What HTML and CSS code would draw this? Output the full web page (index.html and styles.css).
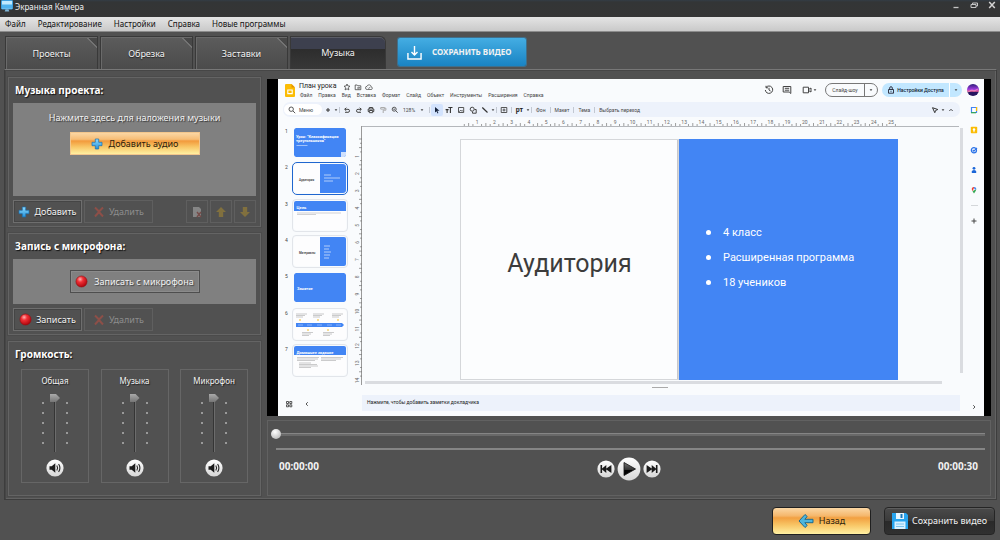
FILE: index.html
```html
<!DOCTYPE html>
<html lang="ru">
<head>
<meta charset="utf-8">
<title>Экранная Камера</title>
<link rel="stylesheet" href="styles.css">
</head>
<body>
<svg class="defs" aria-hidden="true">
  <defs>
    <linearGradient id="g-blue" x1="0" y1="0" x2="0" y2="1"><stop offset="0" stop-color="#8fdcff"/><stop offset="1" stop-color="#2390d8"/></linearGradient>
    <linearGradient id="g-orb" x1="0" y1="0" x2="0" y2="1"><stop offset="0" stop-color="#ffffff"/><stop offset="1" stop-color="#d6d6d6"/></linearGradient>
    <linearGradient id="g-dark" x1="0" y1="0" x2="0" y2="1"><stop offset="0" stop-color="#777"/><stop offset=".55" stop-color="#333"/><stop offset=".56" stop-color="#000"/></linearGradient>
    <radialGradient id="g-red" cx=".38" cy=".3" r=".75"><stop offset="0" stop-color="#ffb0b0"/><stop offset=".35" stop-color="#f03036"/><stop offset="1" stop-color="#a80008"/></radialGradient>
    <linearGradient id="g-avatar" x1="0" y1="0" x2="0" y2="1"><stop offset="0" stop-color="#2a1b78"/><stop offset=".45" stop-color="#a03be0"/><stop offset=".6" stop-color="#f0609a"/><stop offset=".7" stop-color="#24145e"/></linearGradient>
  </defs>
  <symbol id="i-plus" viewBox="0 0 12 12"><path d="M4.300 1h3.400v3.300H11v3.400H7.700V11H4.300V7.700H1V4.300h3.300z" fill="url(#g-blue)" stroke="#1b6fae" stroke-width=".7"/></symbol>
  <symbol id="i-cross" viewBox="0 0 12 12"><path d="M2 1.500 6 5.500l4-4M2 10.500 6 6l4 4.500" fill="none" stroke="#8d4f48" stroke-width="2"/></symbol>
  <symbol id="i-rec" viewBox="0 0 14 14"><circle cx="7" cy="7" r="6" fill="url(#g-red)" stroke="#8f1014" stroke-width=".6"/></symbol>
  <symbol id="i-up" viewBox="0 0 12 12"><path d="M6 1l5 5H8.200v5H3.800V6H1z" fill="#81703e"/></symbol>
  <symbol id="i-speaker" viewBox="0 0 18 18"><circle cx="9" cy="9" r="8.600" fill="url(#g-orb)"/><path d="M3.500 7.300h2.200L9.300 4.200v9.600L5.700 10.700H3.500z" fill="#1b1b1b"/><path d="M10.800 6.500q1.600 2.500 0 5M12.600 5q2.600 4 0 8" fill="none" stroke="#222" stroke-width="1.100"/></symbol>
  <symbol id="i-prev" viewBox="0 0 18 18"><circle cx="9" cy="9" r="8.600" fill="url(#g-orb)"/><path d="M3.500 5h1.600v3.600L9.300 5v3.600L14.400 5v8L9.300 9.400V13L5.100 9.400V13H3.500z" fill="#1b1b1b"/></symbol>
  <symbol id="i-play" viewBox="0 0 24 24"><circle cx="12" cy="12" r="11.400" fill="url(#g-orb)"/><path d="M7 5.500 18.500 12 7 18.500z" fill="url(#g-dark)" stroke="#111" stroke-width=".8"/></symbol>
  <symbol id="i-caret" viewBox="0 0 4 4"><path d="M.6 1.200h2.800L2 2.900z" fill="#444"/></symbol>
</svg>

<div class="window">
  <header class="titlebar">
    <svg class="app-icon" viewBox="0 0 12 12"><rect x=".5" y=".5" width="11" height="8.500" rx=".6" fill="#bfe9ff" stroke="#3c9fe0"/><path d="M1 4.500h10V8.500H1z" fill="#4fb2ee"/><path d="M4.500 9.200h3l.8 2.300H3.700z" fill="#7fb6d8"/></svg>
    <h1 class="title">Экранная Камера</h1>
    <div class="winbtns">
      <button type="button" aria-label="Свернуть"><svg viewBox="0 0 8 8"><path d="M1.500 6.500h5" stroke="#c4c4c4" stroke-width="1.300"/></svg></button>
      <button type="button" aria-label="Развернуть"><svg viewBox="0 0 8 8"><path d="M1 3.500h5v3H1zM2.500 3.500v-1.500H7.500v3H6" fill="none" stroke="#c4c4c4"/></svg></button>
      <button type="button" aria-label="Закрыть"><svg viewBox="0 0 8 8"><path d="M1.200 1l5.600 6M6.800 1 1.200 7" stroke="#d4d4d4" stroke-width="1.500"/></svg></button>
    </div>
  </header>

  <nav class="menubar">
    <a href="#">Файл</a><a href="#">Редактирование</a><a href="#">Настройки</a><a href="#">Справка</a><a href="#">Новые программы</a>
  </nav>

  <div class="tabs">
    <button type="button" class="tab">Проекты</button>
    <button type="button" class="tab">Обрезка</button>
    <button type="button" class="tab">Заставки</button>
    <button type="button" class="tab active">Музыка</button>
    <button type="button" class="save-top">
      <svg viewBox="0 0 16 16"><path d="M1 8.500V15h14V8.500M8 1v9.500M4.800 7.500 8 10.700l3.200-3.200" fill="none" stroke="#fff" stroke-width="1.500"/></svg>
      СОХРАНИТЬ ВИДЕО
    </button>
  </div>

  <main class="workspace">
    <aside class="sidebar">
      <section class="panel">
        <h2>Музыка проекта:</h2>
        <div class="well well-music">
          <p>Нажмите здесь для наложения музыки</p>
          <button type="button" class="btn-orange wide"><svg class="ic"><use href="#i-plus"/></svg>Добавить аудио</button>
        </div>
        <div class="row">
          <button type="button" class="btn"><svg class="ic"><use href="#i-plus"/></svg>Добавить</button>
          <button type="button" class="btn" disabled><svg class="ic"><use href="#i-cross"/></svg>Удалить</button>
          <span class="spacer"></span>
          <button type="button" class="btn sq" disabled aria-label="Обрезать"><svg class="ic" viewBox="0 0 12 12"><path d="M2 1h6l2 2v8H2z" fill="#858585"/><path d="M6 6l4 5M10 6l-4 5" stroke="#754b48" stroke-width="1.400"/></svg></button>
          <button type="button" class="btn sq" disabled aria-label="Вверх"><svg class="ic"><use href="#i-up"/></svg></button>
          <button type="button" class="btn sq" disabled aria-label="Вниз"><svg class="ic flip-y"><use href="#i-up"/></svg></button>
        </div>
      </section>

      <section class="panel">
        <h2>Запись с микрофона:</h2>
        <div class="well well-mic">
          <button type="button" class="btn-grey wide"><svg class="ic-l"><use href="#i-rec"/></svg>Записать с микрофона</button>
        </div>
        <div class="row">
          <button type="button" class="btn"><svg class="ic-l"><use href="#i-rec"/></svg>Записать</button>
          <button type="button" class="btn" disabled><svg class="ic"><use href="#i-cross"/></svg>Удалить</button>
        </div>
      </section>

      <section class="panel grow">
        <h2>Громкость:</h2>
        <div class="volumes">
          <div class="volume"><label for="v1">Общая</label><div class="fader"><input id="v1" type="range" value="100"></div><button type="button" class="round" aria-label="Звук: общая"><svg><use href="#i-speaker"/></svg></button></div>
          <div class="volume"><label for="v2">Музыка</label><div class="fader"><input id="v2" type="range" value="100"></div><button type="button" class="round" aria-label="Звук: музыка"><svg><use href="#i-speaker"/></svg></button></div>
          <div class="volume"><label for="v3">Микрофон</label><div class="fader"><input id="v3" type="range" value="100"></div><button type="button" class="round" aria-label="Звук: микрофон"><svg><use href="#i-speaker"/></svg></button></div>
        </div>
      </section>
    </aside>

    <div class="content">
      <div class="video">
        <div class="slides">
          <div class="s-header">
            <svg class="s-logo" viewBox="0 0 10 13"><path d="M1 0h5.500L10 3.500V12a1 1 0 0 1-1 1H1a1 1 0 0 1-1-1V1a1 1 0 0 1 1-1z" fill="#fbbc04"/><path d="M6.500 0 10 3.500H6.500z" fill="#e59400"/><path d="M2.800 6h4.400v3.600H2.800z" fill="none" stroke="#fff" stroke-width="1.100"/></svg>
            <div class="s-names">
              <div class="s-title">План урока
                <svg viewBox="0 0 8 8"><path d="M4 1l.9 2 2.100.2-1.600 1.500.5 2.200L4 5.800 2.100 6.900l.5-2.200L1 3.200 3.100 3z" fill="none" stroke="#444" stroke-width=".8"/></svg>
                <svg viewBox="0 0 8 8"><path d="M1.200 2h2l.7.8h2.900v3.900H1.200zM3 5h2.400M4.500 3.900 5.600 5l-1.100 1" fill="none" stroke="#444" stroke-width=".8"/></svg>
                <svg viewBox="0 0 8 8"><path d="M2.200 6.500h3.800a1.300 1.300 0 0 0 .1-2.600A2.100 2.100 0 0 0 2 3.300a1.600 1.600 0 0 0 .2 3.200zM3 4.700l.8.8L5.200 4" fill="none" stroke="#444" stroke-width=".7"/></svg>
              </div>
              <div class="s-menu"><span>Файл</span><span>Правка</span><span>Вид</span><span>Вставка</span><span>Формат</span><span>Слайд</span><span>Объект</span><span>Инструменты</span><span>Расширения</span><span>Справка</span></div>
            </div>
            <div class="s-actions">
              <svg class="a-ic" viewBox="0 0 10 10"><path d="M2 2.500A3.700 3.700 0 1 1 1.300 5M2 .8v2h2M5 2.800V5l1.600 1" fill="none" stroke="#444"/></svg>
              <svg class="a-ic" viewBox="0 0 10 10"><path d="M1.200 1.500h7.600v7L7.200 7h-6zM2.800 3.300h4.400M2.800 5.200h4.400" fill="none" stroke="#444"/></svg>
              <span class="cam"><svg class="a-ic" viewBox="0 0 10 10"><path d="M1.200 2.200h5.300v5.600H1.200zM6.500 4.500 9 3v4L6.500 5.500z" fill="none" stroke="#444"/></svg><svg class="caret"><use href="#i-caret"/></svg></span>
              <span class="pill show"><span>Слайд-шоу</span><svg class="caret"><use href="#i-caret"/></svg></span>
              <span class="pill share"><span><svg viewBox="0 0 8 8"><path d="M1.500 3.500h5v3.700h-5zM2.700 3.500V2a1.300 1.300 0 0 1 2.600 0v1.500M4 4.800v1" fill="none" stroke="#223" stroke-width=".9"/></svg>Настройки Доступа</span><svg class="caret"><use href="#i-caret"/></svg></span>
              <svg class="avatar" viewBox="0 0 12 12"><circle cx="6" cy="6" r="6" fill="url(#g-avatar)"/><path d="M1 8 5 6l2 1 4-2" stroke="#f5a0c0" stroke-width=".8" fill="none"/></svg>
            </div>
          </div>

          <div class="s-main">
            <div class="s-toolbar">
              <span class="search"><svg viewBox="0 0 8 8"><path d="M5 5l2.200 2.200M5.400 3.200a2.200 2.200 0 1 1-4.400 0 2.200 2.200 0 0 1 4.400 0z" fill="none" stroke="#444" stroke-width=".9"/></svg>Меню</span>
              <svg class="t" viewBox="0 0 12 12"><path d="M6 4v4M4 6h4" stroke="#333"/></svg>
              <svg class="caret"><use href="#i-caret"/></svg><i></i>
              <svg class="t" viewBox="0 0 12 12"><path d="M4 8.300h3a1.500 1.500 0 0 0 0-3H3.800M5.300 3.700 3.700 5.300l1.600 1.600" fill="none" stroke="#444"/></svg>
              <svg class="t" viewBox="0 0 12 12"><path d="M8 8.300H5a1.500 1.500 0 0 1 0-3h3.200M6.700 3.700l1.600 1.600-1.600 1.600" fill="none" stroke="#444"/></svg>
              <svg class="t" viewBox="0 0 12 12"><path d="M4.300 5V3.500h3.400V5M4.300 7.500H3.200V5h5.600v2.500H7.700M4.300 6.500h3.400v2.200H4.300z" fill="none" stroke="#444"/></svg>
              <svg class="t" viewBox="0 0 12 12"><path d="M3.700 3.500h4v1.600h-4zM7.700 4.200h1.200v2H6.200v2.800" fill="none" stroke="#aaa"/></svg>
              <svg class="t" viewBox="0 0 12 12"><path d="M6.700 6.700l2 2M7.200 5.200a2 2 0 1 1-4 0 2 2 0 0 1 4 0zM4.300 5.200h1.800" fill="none" stroke="#444" stroke-width=".9"/></svg>
              <span class="pct">128%</span><svg class="caret wide-c"><use href="#i-caret"/></svg><i></i>
              <svg class="t on" viewBox="0 0 12 12"><path d="M4 3l4.500 3.700H6.300L7.400 9l-.9.400-1-2.200L4 8.500z" fill="#16233c"/></svg>
              <svg class="t" viewBox="0 0 12 12"><path d="M5.300 3.500h4.200M7.400 3.500V9M2.600 5.600h3M4.100 5.600V9" stroke="#333" stroke-width="1.100"/></svg>
              <svg class="t" viewBox="0 0 12 12"><path d="M3.500 3.500h5.200v5H3.500zM4.300 7.700l1.400-1.600 1 1 .6-.6 1 1.200" fill="none" stroke="#444" stroke-width=".9"/></svg>
              <svg class="t" viewBox="0 0 12 12"><circle cx="5.200" cy="5.200" r="2" fill="none" stroke="#444"/><path d="M7.500 5.500h1.700v3.700H5.500V7.600" fill="none" stroke="#444"/></svg>
              <svg class="t" viewBox="0 0 12 12"><path d="M3.300 3.500l5.200 5" stroke="#333" stroke-width="1.200"/></svg>
              <svg class="caret"><use href="#i-caret"/></svg><i></i>
              <svg class="t" viewBox="0 0 12 12"><path d="M3.200 3.500h5.600v5H3.200zM6 4.500v3M4.500 6h3" fill="none" stroke="#444" stroke-width=".9"/></svg><i></i>
              <b class="py">рт</b><svg class="caret"><use href="#i-caret"/></svg><i></i>
              <span class="w">Фон</span><i></i><span class="w">Макет</span><i></i><span class="w">Тема</span><i></i><span class="w">Выбрать переход</span>
              <span class="spacer"></span>
              <svg class="t" viewBox="0 0 12 12"><path d="M3.500 3.700l5.300 1.800-2.200 1-.8 2.200z" fill="none" stroke="#333"/></svg>
              <svg class="caret"><use href="#i-caret"/></svg>
              <svg class="t end" viewBox="0 0 12 12"><path d="M4.300 7 6 5.300 7.700 7" fill="none" stroke="#333" stroke-width=".9"/></svg>
            </div>

            <div class="s-body">
              <div class="film">
                <ol class="thumbs">
                  <li><span>1</span><svg class="thumb" viewBox="0 0 52 29"><rect width="52" height="29" rx="2" fill="#4285f4"/><path d="M47 29v-5h5v3a2 2 0 0 1-2 2z" fill="#cfe0fc"/><text x="2" y="10" class="tt">Урок: "Классификация</text><text x="2" y="14" class="tt">треугольников"</text><path d="M2.500 17.500h11" stroke="#b8d1fb" stroke-width=".8"/></svg></li>
                  <li class="current"><span>2</span><svg class="thumb" viewBox="0 0 52 29"><rect width="52" height="29" fill="#fdfdfe"/><rect x="26" width="26" height="29" fill="#4285f4"/><text x="5" y="17" class="td">Аудитория</text><path d="M30 11h7M30 14h16M30 17h9" stroke="#cfe0fc" stroke-width=".8"/></svg></li>
                  <li><span>3</span><svg class="thumb line" viewBox="0 0 52 29"><rect width="52" height="29" fill="#fdfdfe"/><rect width="52" height="10" fill="#4285f4"/><text x="2.500" y="8" class="tt">Цель</text><path d="M3 12h44M3 13.500h19" stroke="#b5b5b8" stroke-width=".6"/></svg></li>
                  <li><span>4</span><svg class="thumb line" viewBox="0 0 52 29"><rect width="52" height="29" fill="#fdfdfe"/><rect x="26" width="26" height="29" fill="#4285f4"/><text x="5" y="17" class="td">Материалы</text><path d="M30 9h6M30 12h5M30 15h7M30 18h6M30 21h5" stroke="#cfe0fc" stroke-width=".8"/></svg></li>
                  <li><span>5</span><svg class="thumb" viewBox="0 0 52 29"><rect width="52" height="29" rx="2" fill="#4285f4"/><text x="3" y="16.500" class="tt">Занятие</text></svg></li>
                  <li><span>6</span><svg class="thumb line" viewBox="0 0 52 29"><rect width="52" height="29" fill="#fdfdfe"/><path d="M2 13h46l2 2-2 2H2z" fill="#4285f4"/><path d="M4 15h5M13 15h5M23 15h5M33 15h5M42 15h5" stroke="#a9c7fa" stroke-width=".7"/><path d="M2 4h11M2 5.500h9M2 7h7M19 4h11M19 5.500h9M19 7h7M38 4h11M38 5.500h9M38 7h7M8 22.500h11M8 24h9M8 25.500h7M29 22.500h11M29 24h9M29 25.500h7" stroke="#aaa" stroke-width=".6"/><path d="M5 10h2M23 10h2M43 10h2M13 20h2M33 20h2" stroke="#f2bd2c" stroke-width="1.200"/></svg></li>
                  <li><span>7</span><svg class="thumb line" viewBox="0 0 52 29"><rect width="52" height="29" fill="#fdfdfe"/><rect width="52" height="9" fill="#4285f4"/><text x="2.500" y="7.500" class="tt">Домашнее задание</text><path d="M3 11.500h22M3 13h21M3 14.500h18M27 11.500h22M27 13h20M27 14.500h15M5 17h12M5 18.500h18M5 20h19M5 21.500h12" stroke="#aaa" stroke-width=".6"/></svg></li>
                </ol>
                <div class="film-foot">
                  <svg viewBox="0 0 8 8"><path d="M1.500 1.500h2v2h-2zM4.800 1.500h2v2h-2zM1.500 4.800h2v2h-2zM4.800 4.800h2v2h-2z" fill="none" stroke="#444" stroke-width=".9"/></svg>
                  <svg viewBox="0 0 8 8"><path d="M4.800 2.200 3 4l1.800 1.800" fill="none" stroke="#444" stroke-width=".9"/></svg>
                </div>
              </div>
              <svg class="ruler-v" id="ruler-v"></svg>
              <div class="stage">
                <svg class="ruler-h" id="ruler-h"></svg>
                <div class="canvas">
                  <div class="slide">
                    <div class="slide-l">Аудитория</div>
                    <ul class="slide-r"><li>4 класс</li><li>Расширенная программа</li><li>18 учеников</li></ul>
                  </div>
                  <div class="vscroll"></div>
                </div>
                <div class="hscroll"></div>
                <div class="grip"></div>
                <div class="notes">Нажмите, чтобы добавить заметки докладчика</div>
              </div>
            </div>
          </div>

          <div class="s-rail">
            <svg viewBox="0 0 8 8"><path d="M1.500 1.500h5v5h-5z" fill="#fff" stroke="#4285f4" stroke-width="1.200"/><path d="M6.600 1v4" stroke="#fbbc04" stroke-width="1.200"/><path d="M1 6.700h5" stroke="#34a853" stroke-width="1.200"/></svg>
            <svg viewBox="0 0 8 8"><rect x=".8" y=".8" width="6.400" height="6.400" rx=".8" fill="#fbbc04"/><circle cx="4" cy="3.500" r="1.200" fill="#fff"/><path d="M4 4v2.200" stroke="#fff"/></svg>
            <svg viewBox="0 0 8 8"><circle cx="3.900" cy="4.200" r="2.600" fill="none" stroke="#2a72e8" stroke-width="1.200"/><path d="M2.700 4l1.200 1.200L7 1.900" fill="none" stroke="#2a72e8" stroke-width="1.100"/></svg>
            <svg viewBox="0 0 8 8"><circle cx="4" cy="2.300" r="1.400" fill="#1a66d8"/><path d="M1.800 7V5.500a2.200 1.500 0 0 1 4.400 0V7z" fill="#1a66d8"/></svg>
            <svg viewBox="0 0 8 8"><path d="M4 7.500 2.500 5.200 5.500 3.500 6.300 3.600Q6.200 4.800 4 7.500z" fill="#34a853"/><path d="M1.800 3.500A2.200 2.200 0 0 1 4 1v2.500L2.400 5z" fill="#ea4335"/><path d="M4 1a2.200 2.200 0 0 1 2.200 2.500H4z" fill="#4285f4"/><circle cx="4" cy="3.200" r=".8" fill="#fff"/></svg>
            <hr>
            <svg viewBox="0 0 8 8"><path d="M4 1.500v5M1.500 4h5" stroke="#444"/></svg>
            <span class="spacer"></span>
            <svg class="last" viewBox="0 0 8 8"><path d="M3.200 2.200 5 4 3.200 5.800" fill="none" stroke="#444" stroke-width=".9"/></svg>
          </div>
        </div>
      </div>

      <section class="player">
        <input class="seek" type="range" value="0" aria-label="Позиция">
        <div class="line2"></div>
        <div class="transport">
          <time>00:00:00</time>
          <div class="keys">
            <button type="button" class="round" aria-label="В начало"><svg><use href="#i-prev"/></svg></button>
            <button type="button" class="round big" aria-label="Воспроизвести"><svg><use href="#i-play"/></svg></button>
            <button type="button" class="round" aria-label="В конец"><svg class="flip-x"><use href="#i-prev"/></svg></button>
          </div>
          <time>00:00:30</time>
        </div>
      </section>
    </div>
  </main>

  <footer class="footer">
    <button type="button" class="foot-btn back"><svg viewBox="0 0 16 16"><path d="M7 1.500 9.200 3.500 6.800 6.300H15v3.400H6.800l2.400 2.800L7 14.500 1 8z" fill="#4db5dd" stroke="#1f6a8c"/></svg>Назад</button>
    <button type="button" class="foot-btn save"><svg viewBox="0 0 16 16"><path d="M0 0h14l2 2v14H0z" fill="#27a4ee"/><path d="M4 0h8v6H4z" fill="#e6f6ff"/><path d="M8.500 1h2v4h-2z" fill="#1876b8"/><path d="M2.500 8.500h11V16h-11z" fill="#d9f1ff"/><path d="M4 11h8M4 13.500h8" stroke="#7cc4ee"/></svg>Сохранить видео</button>
  </footer>
</div>
<script src="rulers.js"></script>
</body>
</html>
```

FILE: styles.css
```css
* { box-sizing: border-box; }
body { margin: 0; background: #515151; color: #f2f2f2; font: 9px/12px "Noto Sans", "Open Sans", sans-serif; }
button { font: inherit; color: inherit; border: 0; padding: 0; background: none; }
h1, h2, p, ul, ol { margin: 0; padding: 0; font-size: inherit; list-style: none; }
svg { display: block; flex: none; }
.defs { position: absolute; width: 0; height: 0; }
.spacer { flex: 1; }
.window { min-height: 100vh; display: flex; flex-direction: column; }

.titlebar { display: flex; align-items: flex-start; height: 17px; background: linear-gradient(#333c45 0, #333536 2px, #353535); }
.app-icon { width: 12px; height: 12px; margin-left: 1px; }
.title { font-weight: 400; font-size: 8px; margin-left: 2px; line-height: 13px; }
.winbtns { display: flex; gap: 10px; margin: 1px 4px 0 auto; }
.winbtns svg { width: 8px; height: 8px; }

.menubar { display: flex; gap: 12px; height: 15px; padding-left: 5px; background: linear-gradient(#e4e4e4, #c9c9c9); border-bottom: 1px solid #8c8c8c; font-size: 8px; }
.menubar a { color: #111; text-decoration: none; line-height: 14px; }

.tabs { display: flex; gap: 2px; height: 37px; padding: 4px 4px 0 5px; }
.tab { width: 93px; height: 33px; border: 1px solid #393939; border-bottom: 0; padding-top: 2px; background: linear-gradient(225deg, #484848 0 7px, #737373 7px 8px, transparent 8px), linear-gradient(#5c5c5c, #4b4b4b); box-shadow: inset 1px 1px #6a6a6a; text-shadow: 0 1px 1px #222; }
.tab.active { width: 96px; border-radius: 0 6px 0 0; padding: 0; background: linear-gradient(#3d404e 0 12px, #2d2d2d 12px, #383838); box-shadow: inset 0 1px #5b5d66; }
.save-top { display: flex; align-items: center; gap: 10px; width: 128px; height: 28px; margin: 2px 0 0 10px; padding-left: 9px; border-radius: 2px; background: linear-gradient(#44ade3, #1983c3); box-shadow: 0 0 0 1px #3f6f8b; font-size: 8px; font-weight: 700; white-space: nowrap; }
.save-top svg { width: 15px; height: 15px; }

.workspace { display: flex; gap: 6px; margin: 0 3px 0 4px; padding: 7px 5px 3px 3px; border: 1px solid #3d3d3d; border-top-color: #777; box-shadow: inset 1px 1px #464646, inset -1px -1px #626262; }
.sidebar { flex: none; width: 253px; display: flex; flex-direction: column; gap: 6px; }
.panel { padding: 5px 4px 3px; border: 1px solid #646464; box-shadow: 0 0 0 1px #4b4b4b; }
.panel.grow { flex: 1; }
.panel h2 { padding-left: 2px; font-size: 10px; line-height: 14px; font-weight: 700; text-shadow: 1px 1px 1px #111; color: #fff; }
.well { display: flex; flex-direction: column; align-items: center; margin-top: 6px; background: #808080; }
.well-music { height: 93px; padding-top: 9px; gap: 8px; }
.well-music p { text-shadow: 1px 1px 1px #333; }
.well-mic { height: 45px; justify-content: center; }
.row { display: flex; gap: 2px; margin-top: 4px; }
.btn, .wide { display: flex; align-items: center; justify-content: center; gap: 4px; height: 23px; white-space: nowrap; }
.btn { width: 69px; border: 1px solid #6e6e6e; box-shadow: inset 0 0 0 1px #454545; text-shadow: 0 1px 1px #222; }
.btn:disabled { color: #8d8d8d; border-color: #5f5f5f; box-shadow: none; text-shadow: none; }
.btn.sq { width: 22px; }
.ic { width: 12px; height: 12px; }
.ic-l { width: 13px; height: 13px; }
.flip-y { transform: scaleY(-1); }
.flip-x { transform: scaleX(-1); }
.wide { width: 130px; gap: 6px; }
.btn-orange { color: #2c1d0c; background: linear-gradient(#fbd7a4, #f7bd76 30%, #f29a3c 38%, #f8c565 65%, #fff0a2); border: 1px solid #f3c68c; }
.btn-grey { border: 1px solid #4e4e4e; box-shadow: inset 0 0 0 1px #8b8b8b; text-shadow: 1px 1px 1px #444; }

.volumes { display: flex; justify-content: space-between; margin: 8px 8px 0; }
.volume { display: flex; flex-direction: column; align-items: center; width: 68px; height: 114px; border: 1px solid #666; padding-top: 5px; text-shadow: 1px 1px 1px #222; font-size: 8px; }
.fader { width: 26px; height: 58px; margin-top: 7px; display: flex; justify-content: center; background: radial-gradient(circle at 1px 5px, #999 0 1px, transparent 1px) left / 2px 10px repeat-y, radial-gradient(circle at 1px 5px, #999 0 1px, transparent 1px) right / 2px 10px repeat-y; }
.fader input { appearance: none; writing-mode: vertical-lr; direction: rtl; width: 10px; height: 58px; margin: 0; background: linear-gradient(90deg, #353535 50%, #6c6c6c 50%) center / 2px 100% no-repeat; }
.fader input::-webkit-slider-thumb { appearance: none; width: 10px; height: 8px; background: linear-gradient(#aaa, #767676); clip-path: polygon(0 0, 60% 0, 100% 50%, 60% 100%, 0 100%); }
.round, .round svg { width: 18px; height: 18px; }
.fader + .round { margin-top: 7px; }
.round.big, .round.big svg { width: 24px; height: 24px; }

.content { flex: 1; min-width: 0; display: flex; flex-direction: column; gap: 4px; padding-top: 2px; }
.video { background: #000; padding: 0 7px 0 11px; }
.player { border: 1px solid #616161; padding: 7px 5px 0 3px; height: 76px; }
.seek { appearance: none; display: block; width: 100%; height: 12px; margin: 0; background: linear-gradient(#858585 50%, #696969 50%) center / 100% 3px no-repeat; }
.seek::-webkit-slider-thumb { appearance: none; width: 10px; height: 10px; border-radius: 50%; background: radial-gradient(circle at 40% 30%, #fff, #aaa); }
.line2 { height: 2px; margin: 8px 0 0 5px; background: #858585; }
.transport { display: flex; justify-content: space-between; align-items: center; margin-top: 7px; padding: 0 7px 0 8px; }
.transport time { font-size: 10px; font-weight: 700; padding-bottom: 6px; }
.keys { display: flex; align-items: center; gap: 2px; }

.footer { display: flex; justify-content: flex-end; gap: 13px; padding: 7px 5px 4px; }
.foot-btn { display: flex; align-items: center; justify-content: center; gap: 5px; height: 28px; border: 1px solid #202020; border-radius: 4px; white-space: nowrap; }
.foot-btn svg { width: 16px; height: 16px; }
.back { width: 99px; color: #2c1d0c; background: linear-gradient(#fbd7a4, #f5b76c 30%, #f2a041 38%, #f8c565 65%, #fff0a2); }
.save { width: 111px; gap: 4px; background: linear-gradient(#4a4a4a, #3b3b3b 48%, #2a2a2a 52%, #303030); border-color: #252525; box-shadow: inset 0 1px #5d5d5d; }

/* slide editor inside the video frame */
.slides { display: grid; grid-template-columns: 1fr 20px; grid-template-rows: 23px 1fr; height: 337px; background: #f9fbfd; color: #444; font: 5px/8px Roboto, sans-serif; overflow: hidden; }
.s-header { grid-column: 1 / 3; display: flex; padding: 3px 5px 0 7px; }
.s-logo { width: 10px; height: 13px; margin-top: 2px; }
.s-names { margin-left: 4px; }
.s-title { display: flex; align-items: center; gap: 3px; font-size: 7px; line-height: 9px; color: #222; }
.s-title svg { width: 8px; height: 8px; }
.s-title svg:first-child { margin-left: 4px; }
.s-menu { display: flex; gap: 6px; padding-left: 1px; line-height: 9px; }
.s-actions { margin-left: auto; display: flex; height: 14px; margin-top: 1px; align-items: center; gap: 8px; }
.a-ic { width: 10px; height: 10px; }
.cam { display: flex; align-items: center; gap: 1px; margin-left: 2px; }
.caret { width: 4px; height: 4px; }
.pill { display: flex; align-items: center; height: 14px; border-radius: 7px; }
.pill > span { display: flex; align-items: center; justify-content: center; height: 100%; border-right: 1px solid #777; flex: 1; }
.pill > .caret { margin: 0 4px; }
.show { width: 53px; border: 1px solid #777; }
.share { width: 80px; margin-left: -4px; background: #c2e7ff; color: #123; font-weight: 500; }
.share > span { border-color: #fff; gap: 2px; }
.share svg:not(.caret) { width: 8px; height: 8px; }
.avatar { width: 12px; height: 12px; margin-left: -3px; }

.s-main { min-width: 0; display: flex; flex-direction: column; }
.s-toolbar { display: flex; align-items: center; height: 15px; margin: 0 4px 0 5px; padding: 0 3px 0 1px; border-radius: 7px; background: #edf2fb; }
.search { display: flex; align-items: center; gap: 3px; width: 38px; height: 11px; padding-left: 4px; border-radius: 6px; background: #fff; }
.search svg { width: 8px; height: 8px; }
.t { width: 12px; height: 12px; }
.t.on { background: #d3e3fd; border-radius: 2px; }
.s-toolbar i { width: 1px; height: 6px; margin: 0 1px; background: #c2c8d2; }
.pct { width: 14px; text-align: center; margin-left: 1px; }
.wide-c { margin: 0 4px; }
.py { font-size: 7px; width: 13px; text-align: center; color: #222; }
.w { padding: 0 3px; white-space: nowrap; }

.s-body { flex: 1; display: flex; }
.film { width: 76px; display: flex; flex-direction: column; padding: 11px 0 8px 7px; }
.thumbs { display: flex; flex-direction: column; justify-content: space-between; height: 247px; }
.thumbs li { display: flex; gap: 6px; height: 29px; }
.thumbs li > span { width: 3px; line-height: 6px; }
.thumb { width: 52px; height: 29px; border-radius: 2px; }
.thumb.line { outline: 1px solid #e2e5ea; outline-offset: 1px; }
.current .thumb { outline: 1px solid #1f66cf; outline-offset: 1px; border-radius: 3px; }
.tt { font: 700 4px Roboto, sans-serif; fill: #fff; }
.td { font: 500 3px Roboto, sans-serif; fill: #333; }
.film-foot { display: flex; gap: 10px; margin-top: auto; }
.film-foot svg { width: 8px; height: 8px; }
.ruler-v { width: 8px; height: 271px; }
.stage { flex: 1; min-width: 0; display: flex; flex-direction: column; }
.ruler-h { width: 100%; height: 10px; }
.canvas { display: flex; justify-content: space-between; padding: 1px 1px 0 98px; height: 254px; }
.slide { width: 438px; height: 241px; margin-top: 11px; display: grid; grid-template-columns: 1fr 1fr; font-size: 11px; line-height: 25px; }
.slide-l { display: grid; place-items: center; padding-top: 8px; border: 1px solid #d5d7da; background: #fcfdfe; color: #3c3c3c; font-size: 25px; box-shadow: inset -1px 0 #c8c8cb; }
.slide-r { background: #4285f4; color: #fff; padding: 81px 0 0 27px; }
.slide-r li { display: flex; align-items: center; gap: 12px; }
.slide-r li::before { content: ""; width: 5px; height: 5px; border-radius: 50%; background: #fff; }
.vscroll { width: 3px; background: #dadce0; height: 245px; }
.hscroll { height: 3px; margin: 0 22px 0 3px; background: #dadce0; }
.grip { width: 16px; height: 1px; margin: 3px auto 0 290px; background: #aaa; }
.notes { height: 16px; margin: 7px 4px 5px 0; padding-left: 5px; background: #edf2fb; line-height: 15px; color: #222; }
.s-rail { display: flex; flex-direction: column; align-items: center; gap: 12px; padding: 4px 0 5px; }
.s-rail svg { width: 8px; height: 8px; }
.s-rail hr { width: 7px; height: 1px; margin: -1px 0; border: 0; background: #d4d7da; }
```

FILE: rulers.js
```javascript
const NS = "http://www.w3.org/2000/svg";
const CM = 438 / 25.4;

function add(svg, tag, attrs, text) {
  const el = document.createElementNS(NS, tag);
  for (const key in attrs) el.setAttribute(key, attrs[key]);
  if (text) el.textContent = text;
  svg.append(el);
}

function tick(i) {
  return i % 2 === 0 ? 3 : 2;
}

const h = document.getElementById("ruler-h");
add(h, "path", { d: "M0 9.5H597", stroke: "#b4b7bb" });
for (let i = 0; i <= 101; i++) {
  if (i % 4 === 0 && i) add(h, "text", { x: 98 + i * CM / 4, y: 7, "text-anchor": "middle", "font-size": 5, fill: "#666" }, String(i / 4));
  if (i % 4) add(h, "path", { d: `M${98 + i * CM / 4} 9v-${tick(i)}`, stroke: "#777", "stroke-width": 0.7 });
}

const v = document.getElementById("ruler-v");
add(v, "path", { d: "M7.5 9V268", stroke: "#999" });
for (let i = 0; i <= 56; i++) {
  const y = 22 + i * CM / 4;
  if (i % 4 === 0 && i) add(v, "text", { transform: `translate(5 ${y}) rotate(-90)`, "text-anchor": "middle", "font-size": 5, fill: "#666" }, String(i / 4));
  else add(v, "path", { d: `M8 ${y}h-${tick(i)}`, stroke: "#777", "stroke-width": 0.7 });
}
```
